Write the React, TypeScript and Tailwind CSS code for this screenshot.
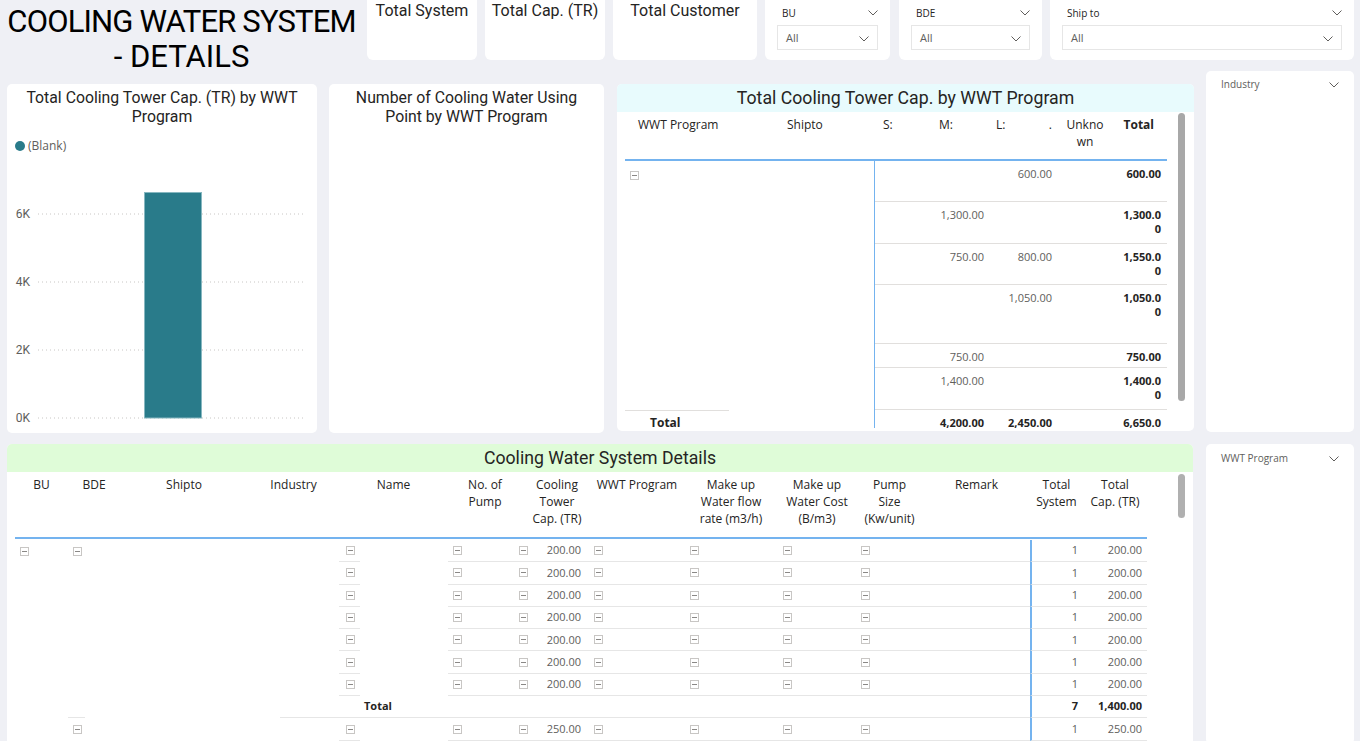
import React from "react";

const DIN = "font-['Roboto',sans-serif]";
const SEG = "font-['Open_Sans',sans-serif]";

const Chevron = ({ c = "#605e5c" }: { c?: string }) => (
  <svg width="10" height="6" viewBox="0 0 10 6" className="block">
    <polyline points="0.5,0.5 5,5 9.5,0.5" fill="none" stroke={c} strokeWidth="1" />
  </svg>
);

const MB = () => (
  <svg width="9" height="9" viewBox="0 0 9 9" className="block shrink-0">
    <rect x="0.5" y="0.5" width="8" height="8" fill="white" stroke="#c8c6c4" />
    <line x1="2" y1="4.5" x2="7" y2="4.5" stroke="#8a8886" />
  </svg>
);

const KpiCard = ({ w, label }: { w: string; label: string }) => (
  <div className={`${w} h-[60px] shrink-0 rounded-b-[6px] bg-white text-center text-[16px] leading-[22px] text-[#252423] ${DIN}`}>
    {label}
  </div>
);

const Slicer = ({ w, label, extra = "" }: { w: string; label: string; extra?: string }) => (
  <div className={`${w} ${extra} h-[60px] shrink-0 rounded-b-[6px] bg-white px-[12px] pt-[6px] ${SEG}`}>
    <div className="flex h-[14px] items-center justify-between pl-[5px]">
      <span className="text-[10px] text-[#252423]">{label}</span>
      <Chevron />
    </div>
    <div className="mt-[5px] flex h-[25px] items-center justify-between border border-[#e6e6e6] px-[8px] pt-[2px]">
      <span className="text-[11px] text-[#605e5c]">All</span>
      <Chevron />
    </div>
  </div>
);

type MRow = { h: string; S?: string; M?: string; L?: string; U?: string; T: string[] };
const mrows: MRow[] = [
  { h: "h-[41px]", L: "600.00", T: ["600.00"] },
  { h: "h-[42px]", M: "1,300.00", T: ["1,300.0", "0"] },
  { h: "h-[41px]", M: "750.00", L: "800.00", T: ["1,550.0", "0"] },
  { h: "h-[59px]", L: "1,050.00", T: ["1,050.0", "0"] },
  { h: "h-[24px]", M: "750.00", T: ["750.00"] },
  { h: "h-[42px]", M: "1,400.00", T: ["1,400.0", "0"] },
];

const Matrix = () => (
  <div className="flex h-[347px] w-[577px] shrink-0 flex-col overflow-hidden rounded-[5px] bg-white">
    <div className={`h-[28px] bg-[#e8fbfd] text-center text-[17.7px] leading-[28px] text-[#252423] ${DIN}`}>
      Total Cooling Tower Cap. by WWT Program
    </div>
    <div className="flex">
      <div className={`ml-[8px] w-[542px] ${SEG}`}>
        <div className="flex h-[49px] border-b-2 border-[#74b3ef] pt-[4px] text-[12px] leading-[17px] text-[#252423]">
          <div className="w-[135px] pl-[13px]">WWT Program</div>
          <div className="w-[114px] pl-[27px]">Shipto</div>
          <div className="w-[56px] pl-[9px]">S:</div>
          <div className="w-[60px] pl-[9px]">M:</div>
          <div className="flex w-[68px] justify-between pl-[6px] pr-[6px]">
            <span>L:</span>
            <span>.</span>
          </div>
          <div className="w-[54px] text-center">
            Unkno
            <br />
            wn
          </div>
          <div className="w-[55px] pr-[13px] text-right font-bold">Total</div>
        </div>
        <div className="flex h-[267px] overflow-hidden text-[11px] leading-[14px]">
          <div className="flex w-[249px] shrink-0 flex-col">
            <div className="h-[249px] shrink-0 pl-[5px] pt-[10px]">
              <MB />
            </div>
            <div className="w-[104px] shrink-0 border-t border-[#e1dfdd] pl-[25px] pt-[5px] text-[12px] font-bold text-[#252423]">
              Total
            </div>
          </div>
          <div className="flex w-[293px] shrink-0 flex-col border-l border-[#74b3ef]">
            {mrows.map((r, i) => (
              <div key={i} className={`flex ${r.h} shrink-0 border-b border-[#e1dfdd] pt-[6px] text-[#605e5c]`}>
                <div className="w-[55px] pr-[6px] text-right">{r.S}</div>
                <div className="w-[60px] pr-[6px] text-right">{r.M}</div>
                <div className="w-[68px] pr-[6px] text-right">{r.L}</div>
                <div className="w-[54px] pr-[6px] text-right">{r.U}</div>
                <div className="w-[55px] pr-[6px] text-right font-bold text-[#252423]">
                  {r.T.map((t, j) => (
                    <div key={j}>{t}</div>
                  ))}
                </div>
              </div>
            ))}
            <div className="flex shrink-0 pt-[6px] font-bold text-[#252423]">
              <div className="w-[55px]" />
              <div className="w-[60px] pr-[6px] text-right">4,200.00</div>
              <div className="w-[68px] pr-[6px] text-right">2,450.00</div>
              <div className="w-[54px]" />
              <div className="w-[55px] pr-[6px] text-right">6,650.0</div>
            </div>
          </div>
        </div>
      </div>
      <div className="ml-[11px] mt-[1px] h-[288px] w-[7px] rounded-full bg-[#a8a8a8]" />
    </div>
  </div>
);

const cols = [
  { w: "w-[53px]", h: ["BU"], hp: "" },
  { w: "w-[52px]", h: ["BDE"], hp: "" },
  { w: "w-[128px]", h: ["Shipto"], hp: "" },
  { w: "w-[91px]", h: ["Industry"], hp: "" },
  { w: "w-[109px]", h: ["Name"], hp: "" },
  { w: "w-[66px]", h: ["No. of", "Pump"], hp: "pl-[8px]" },
  { w: "w-[76px]", h: ["Cooling", "Tower", "Cap. (TR)"], hp: "pl-[10px]" },
  { w: "w-[94px]", h: ["WWT Program"], hp: "" },
  { w: "w-[94px]", h: ["Make up", "Water flow", "rate (m3/h)"], hp: "" },
  { w: "w-[78px]", h: ["Make up", "Water Cost", "(B/m3)"], hp: "" },
  { w: "w-[67px]", h: ["Pump", "Size", "(Kw/unit)"], hp: "" },
  { w: "w-[107px]", h: ["Remark"], hp: "" },
  { w: "w-[53px]", h: ["Total", "System"], hp: "" },
  { w: "w-[64px]", h: ["Total", "Cap. (TR)"], hp: "" },
];

type DRow = { kind: "data" | "total"; bu?: boolean; bde?: boolean; cap?: string; sys: string; tcap: string };
const drows: DRow[] = [
  { kind: "data", bu: true, bde: true, cap: "200.00", sys: "1", tcap: "200.00" },
  { kind: "data", cap: "200.00", sys: "1", tcap: "200.00" },
  { kind: "data", cap: "200.00", sys: "1", tcap: "200.00" },
  { kind: "data", cap: "200.00", sys: "1", tcap: "200.00" },
  { kind: "data", cap: "200.00", sys: "1", tcap: "200.00" },
  { kind: "data", cap: "200.00", sys: "1", tcap: "200.00" },
  { kind: "data", cap: "200.00", sys: "1", tcap: "200.00" },
  { kind: "total", sys: "7", tcap: "1,400.00" },
  { kind: "data", bde: true, cap: "250.00", sys: "1", tcap: "250.00" },
];

const LINE = "border-b border-[#e6e6e6]";

const DetailRow = ({ r }: { r: DRow }) => {
  const isT = r.kind === "total";
  return (
    <div className="flex h-[22.3px] shrink-0 text-[11px] text-[#605e5c]">
      <div className="flex h-full w-[53px] items-center pl-[5px]">{r.bu && <MB />}</div>
      <div className="flex h-full w-[52px] items-start">
        {isT ? (
          <div className={`h-full w-[17px] ${LINE}`} />
        ) : (
          <div className="flex h-full items-center pl-[5px]">{r.bde && <MB />}</div>
        )}
      </div>
      <div className="h-full w-[128px]" />
      <div className="flex h-full w-[91px] justify-end">{isT && <div className={`h-full w-[59px] ${LINE}`} />}</div>
      {isT ? (
        <div className={`flex h-full w-[109px] items-center pl-[25px] text-[11px] font-bold text-[#252423] ${LINE}`}>Total</div>
      ) : (
        <div className="flex h-full w-[109px]">
          <div className={`flex h-full w-[21px] items-center pl-[7px] ${LINE}`}>
            <MB />
          </div>
        </div>
      )}
      <div className={`flex h-full w-[66px] items-center pl-[5px] ${LINE}`}>{!isT && <MB />}</div>
      <div className={`flex h-full w-[76px] items-center pl-[5px] pr-[9px] ${LINE}`}>
        {!isT && <MB />}
        <span className="ml-auto">{r.cap}</span>
      </div>
      <div className={`flex h-full w-[94px] items-center pl-[4px] ${LINE}`}>{!isT && <MB />}</div>
      <div className={`flex h-full w-[94px] items-center pl-[6px] ${LINE}`}>{!isT && <MB />}</div>
      <div className={`flex h-full w-[78px] items-center pl-[5px] ${LINE}`}>{!isT && <MB />}</div>
      <div className={`flex h-full w-[67px] items-center pl-[5px] ${LINE}`}>{!isT && <MB />}</div>
      <div className={`h-full w-[107px] ${LINE}`} />
      <div
        className={`flex h-full w-[53px] items-center justify-end border-l-2 border-l-[#74b3ef] pr-[5px] ${LINE} ${isT ? "font-bold text-[#252423]" : ""}`}
      >
        {r.sys}
      </div>
      <div className={`flex h-full w-[64px] items-center justify-end pr-[5px] ${LINE} ${isT ? "font-bold text-[#252423]" : ""}`}>
        {r.tcap}
      </div>
    </div>
  );
};

const Details = () => (
  <div className="flex h-[310px] w-[1186px] shrink-0 flex-col overflow-hidden rounded-[5px] bg-white">
    <div className={`h-[28px] bg-[#dffcd8] text-center text-[17.7px] leading-[28px] text-[#252423] ${DIN}`}>
      Cooling Water System Details
    </div>
    <div className="flex">
      <div className={`ml-[8px] w-[1132px] ${SEG}`}>
        <div className="flex h-[67px] border-b-2 border-[#74b3ef] pt-[4px] text-[12px] leading-[17px] text-[#252423]">
          {cols.map((c, i) => (
            <div key={i} className={`${c.w} ${c.hp} shrink-0 text-center`}>
              {c.h.map((t, j) => (
                <div key={j}>{t}</div>
              ))}
            </div>
          ))}
        </div>
        <div className="flex flex-col pt-[1px]">
          {drows.map((r, i) => (
            <DetailRow key={i} r={r} />
          ))}
        </div>
      </div>
      <div className="ml-[31px] mt-[2px] h-[44px] w-[7px] rounded-full bg-[#b0b0b0]" />
    </div>
  </div>
);

const SideSlicer = ({ h, label, pt }: { h: string; label: string; pt: string }) => (
  <div className={`${h} w-[148px] rounded-[5px] bg-white ${pt} pl-[15px] pr-[15px] ${SEG}`}>
    <div className="flex items-center justify-between">
      <span className="text-[10px] text-[#605e5c]">{label}</span>
      <Chevron />
    </div>
  </div>
);

export default function App() {
  return (
    <div className={`relative h-[741px] w-[1360px] overflow-hidden bg-[#eff0f5] ${SEG}`}>
      <div className="flex h-[60px]">
        <div className={`h-[60px] w-[363px] shrink-0 pt-[4px] text-center text-[31px] leading-[35px] text-black ${DIN}`}>
          <div className="whitespace-nowrap tracking-[-0.85px]">COOLING WATER SYSTEM</div>
          <div>- DETAILS</div>
        </div>
        <div className="ml-[4px] flex gap-[8px]">
          <KpiCard w="w-[110px]" label="Total System" />
          <KpiCard w="w-[120px]" label="Total Cap. (TR)" />
          <KpiCard w="w-[144px]" label="Total Customer" />
          <Slicer w="w-[125px]" label="BU" extra="mr-[1px]" />
          <Slicer w="w-[143px]" label="BDE" />
          <Slicer w="w-[304px]" label="Ship to" />
        </div>
      </div>
      <div className="mt-[11px] flex">
        <div className="flex w-[1194px] shrink-0 flex-col gap-[11px] pl-[7px] pt-[13px]">
          <div className="flex h-[349px]">
            <div className="flex h-[349px] w-[310px] shrink-0 flex-col rounded-[5px] bg-white">
              <div className={`pt-[4px] text-center text-[15.8px] leading-[19px] text-[#252423] ${DIN}`}>
                Total Cooling Tower Cap. (TR) by WWT
                <br />
                Program
              </div>
              <div className="ml-[8px] mt-[13px] flex h-[14px] items-center gap-[3px]">
                <span className="h-[10px] w-[10px] rounded-full bg-[#297b8a]" />
                <span className="text-[12px] text-[#605e5c]">(Blank)</span>
              </div>
              <svg className="mt-[32px] block" width="310" height="240" viewBox="0 0 310 240">
                {[29, 97, 165, 233].map((y, i) => (
                  <g key={i}>
                    <line x1="31" x2="299" y1={y} y2={y} stroke="#c8c6c4" strokeWidth="1" strokeDasharray="1 3" />
                    <text x="23" y={y + 4} textAnchor="end" fontSize="12" fill="#605e5c" fontFamily="Roboto, sans-serif">
                      {["6K", "4K", "2K", "0K"][i]}
                    </text>
                  </g>
                ))}
                <rect x="137.5" y="7.5" width="57" height="225.5" fill="#297b8a" stroke="#86b7c0" strokeWidth="1" />
              </svg>
            </div>
            <div className="ml-[12px] h-[349px] w-[275px] shrink-0 rounded-[5px] bg-white">
              <div className={`pt-[4px] text-center text-[15.8px] leading-[19px] text-[#252423] ${DIN}`}>
                Number of Cooling Water Using
                <br />
                Point by WWT Program
              </div>
            </div>
            <div className="ml-[13px]">
              <Matrix />
            </div>
          </div>
          <Details />
        </div>
        <div className="ml-[12px] flex w-[148px] shrink-0 flex-col gap-[12px]">
          <SideSlicer h="h-[361px]" label="Industry" pt="pt-[6px]" />
          <SideSlicer h="h-[300px]" label="WWT Program" pt="pt-[7px]" />
        </div>
      </div>
    </div>
  );
}
